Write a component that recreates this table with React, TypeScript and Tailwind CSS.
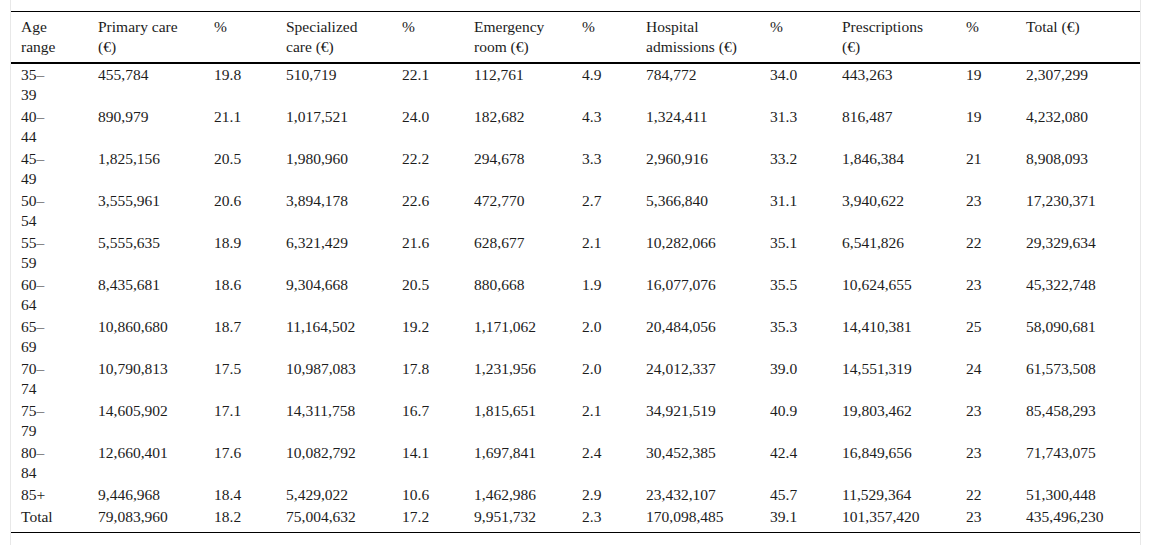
const headers: string[][] = [
  ['Age', 'range'],
  ['Primary care', '(€)'],
  ['%'],
  ['Specialized', 'care (€)'],
  ['%'],
  ['Emergency', 'room (€)'],
  ['%'],
  ['Hospital', 'admissions (€)'],
  ['%'],
  ['Prescriptions', '(€)'],
  ['%'],
  ['Total (€)'],
];

const widths = ['w-[77px]', 'w-[116px]', 'w-[72px]', 'w-[116px]', 'w-[72px]', 'w-[108px]', 'w-[64px]', 'w-[124px]', 'w-[72px]', 'w-[124px]', 'w-[60px]', 'w-[124px]'];

const rows: string[][] = [
  ['35–|39', '455,784', '19.8', '510,719', '22.1', '112,761', '4.9', '784,772', '34.0', '443,263', '19', '2,307,299'],
  ['40–|44', '890,979', '21.1', '1,017,521', '24.0', '182,682', '4.3', '1,324,411', '31.3', '816,487', '19', '4,232,080'],
  ['45–|49', '1,825,156', '20.5', '1,980,960', '22.2', '294,678', '3.3', '2,960,916', '33.2', '1,846,384', '21', '8,908,093'],
  ['50–|54', '3,555,961', '20.6', '3,894,178', '22.6', '472,770', '2.7', '5,366,840', '31.1', '3,940,622', '23', '17,230,371'],
  ['55–|59', '5,555,635', '18.9', '6,321,429', '21.6', '628,677', '2.1', '10,282,066', '35.1', '6,541,826', '22', '29,329,634'],
  ['60–|64', '8,435,681', '18.6', '9,304,668', '20.5', '880,668', '1.9', '16,077,076', '35.5', '10,624,655', '23', '45,322,748'],
  ['65–|69', '10,860,680', '18.7', '11,164,502', '19.2', '1,171,062', '2.0', '20,484,056', '35.3', '14,410,381', '25', '58,090,681'],
  ['70–|74', '10,790,813', '17.5', '10,987,083', '17.8', '1,231,956', '2.0', '24,012,337', '39.0', '14,551,319', '24', '61,573,508'],
  ['75–|79', '14,605,902', '17.1', '14,311,758', '16.7', '1,815,651', '2.1', '34,921,519', '40.9', '19,803,462', '23', '85,458,293'],
  ['80–|84', '12,660,401', '17.6', '10,082,792', '14.1', '1,697,841', '2.4', '30,452,385', '42.4', '16,849,656', '23', '71,743,075'],
  ['85+', '9,446,968', '18.4', '5,429,022', '10.6', '1,462,986', '2.9', '23,432,107', '45.7', '11,529,364', '22', '51,300,448'],
  ['Total', '79,083,960', '18.2', '75,004,632', '17.2', '9,951,732', '2.3', '170,098,485', '39.1', '101,357,420', '23', '435,496,230'],
];

export default function App() {
  return (
    <div className="h-[545px] w-[1151px] bg-white font-['Liberation_Serif','Times_New_Roman',serif]">
      <div className="ml-[10px] h-full w-[1131px] border-x border-[#e8e8e8] pt-[11px]">
        <table className="w-full table-fixed border-collapse font-['Liberation_Serif','Times_New_Roman',serif] text-[15.5px] leading-[20px] text-[#1c1c1c]">
          <colgroup>
            {widths.map((w, i) => (
              <col key={i} className={w} />
            ))}
          </colgroup>
          <thead>
            <tr className="border-t border-b-2 border-black">
              {headers.map((h, i) => (
                <th key={i} className="px-[10px] pt-[5px] pb-[5px] text-left align-top font-normal">
                  {h.map((line, j) => (
                    <div key={j} className="whitespace-nowrap">{line}</div>
                  ))}
                </th>
              ))}
            </tr>
          </thead>
          <tbody>
            {rows.map((r, ri) => {
              const last = ri === rows.length - 1;
              return (
                <tr key={ri} className={last ? 'border-b border-black' : ''}>
                  {r.map((c, ci) => (
                    <td
                      key={ci}
                      className={last ? 'px-[10px] pt-px pb-[5px] align-top whitespace-nowrap' : 'px-[10px] py-px align-top whitespace-nowrap'}
                    >
                      {c.split('|').map((line, j) => (
                        <div key={j}>{line}</div>
                      ))}
                    </td>
                  ))}
                </tr>
              );
            })}
          </tbody>
        </table>
      </div>
    </div>
  );
}
